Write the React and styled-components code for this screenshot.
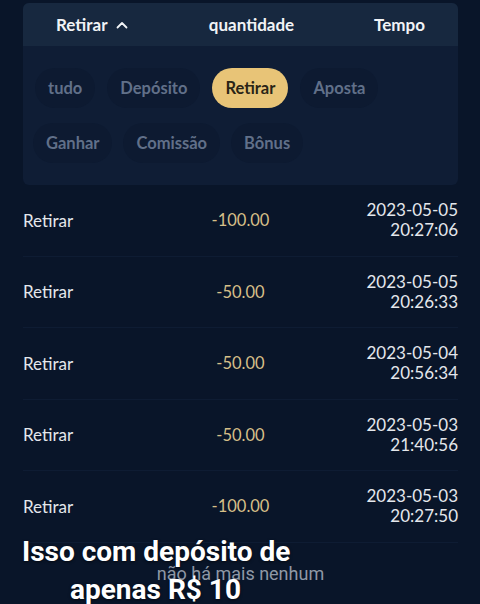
import React from 'react';
import styled, { createGlobalStyle } from 'styled-components';

const GlobalStyle = createGlobalStyle`
  html, body {
    margin: 0;
    padding: 0;
    background: #081428;
  }
  body {
    font-family: Lato, "Noto Sans", sans-serif;
  }
`

const StyledPage = styled.div`
  position: relative;
  width: 480px;
  height: 604px;
  overflow: hidden;
  background: #091529;
  padding: 3px 22px 0px 23px;
  box-sizing: border-box;
`

const StyledPanel = styled.div`
  border-radius: 6px;
  overflow: hidden;
  background: #0f1d35;
`

const StyledHeader = styled.div`
  display: grid;
  grid-template-columns: 170px 1fr 148px;
  align-items: center;
  height: 43px;
  background: #17283f;
  color: #f1f3f6;
  font-size: 17px;
  font-weight: 700;
`

const StyledHeadCell = styled.div`
  display: flex;
  align-items: center;
  gap: 7px;
  justify-content: ${p => p.align || 'center'};
  padding: ${p => p.pad || '0px'};
`

const StyledChips = styled.div`
  display: flex;
  flex-direction: column;
  gap: 15px;
  padding: 22px 0px 22px 10px;
`

const StyledChipRow = styled.div`
  display: flex;
  gap: ${p => p.gap || '9px'};
  padding-left: ${p => p.indent || '0px'};
`

const StyledChip = styled.div`
  height: 40px;
  display: flex;
  align-items: center;
  padding: 0px 13px;
  border-radius: 20px;
  font-size: 16.5px;
  font-weight: 700;
  background: ${p => (p.active ? '#e8c477' : '#0d1a31')};
  color: ${p => (p.active ? '#2a2416' : '#617089')};
`

const StyledRow = styled.div`
  display: grid;
  grid-template-columns: 1fr 1fr 1fr;
  align-items: center;
  height: 70.5px;
  border-bottom: 1px solid #0e1c33;
`

const StyledType = styled.div`
  color: #e4e7ec;
  font-size: 17px;
`

const StyledAmount = styled.div`
  text-align: center;
  color: #d6bf88;
  font-size: 16.5px;
`

const StyledTime = styled.div`
  text-align: right;
  color: #e4e7ec;
  font-size: 17px;
  line-height: 20px;
`

const StyledEnd = styled.div`
  text-align: center;
  color: #8f98a6;
  font-family: Roboto, sans-serif;
  font-size: 18px;
  padding-top: 20px;
`

const StyledCaption = styled.div`
  position: absolute;
  left: 22px;
  top: 533px;
  color: #ffffff;
  font-family: Roboto, sans-serif;
  font-weight: 700;
  font-size: 28px;
  line-height: 38px;
  text-shadow: 0 1px 3px rgba(0, 0, 0, 0.6);
`

const StyledCaptionLine = styled.div`
  padding-left: ${p => p.indent || '0px'};
`

const records = [
  { amount: '-100.00', date: '2023-05-05', time: '20:27:06' },
  { amount: '-50.00', date: '2023-05-05', time: '20:26:33' },
  { amount: '-50.00', date: '2023-05-04', time: '20:56:34' },
  { amount: '-50.00', date: '2023-05-03', time: '21:40:56' },
  { amount: '-100.00', date: '2023-05-03', time: '20:27:50' },
]

function ChevronUp() {
  return (
    <svg width="14" height="14" viewBox="0 0 14 14" fill="none">
      <path d="M2.5 9.5 L7 5 L11.5 9.5" stroke="#f1f3f6" strokeWidth="1.8" strokeLinecap="round" strokeLinejoin="round" />
    </svg>
  )
}

function App() {
  return (
    <StyledPage>
      <GlobalStyle />
      <StyledPanel>
        <StyledHeader>
          <StyledHeadCell align="flex-start" pad="0px 0px 0px 33px">
            Retirar <ChevronUp />
          </StyledHeadCell>
          <StyledHeadCell>quantidade</StyledHeadCell>
          <StyledHeadCell align="flex-end" pad="0px 33px 0px 0px">Tempo</StyledHeadCell>
        </StyledHeader>
        <StyledChips>
          <StyledChipRow gap="12px" indent="2px">
            <StyledChip>tudo</StyledChip>
            <StyledChip>Depósito</StyledChip>
            <StyledChip active>Retirar</StyledChip>
            <StyledChip>Aposta</StyledChip>
          </StyledChipRow>
          <StyledChipRow gap="11px">
            <StyledChip>Ganhar</StyledChip>
            <StyledChip>Comissão</StyledChip>
            <StyledChip>Bônus</StyledChip>
          </StyledChipRow>
        </StyledChips>
      </StyledPanel>
      {records.map((r, i) => (
        <StyledRow key={i}>
          <StyledType>Retirar</StyledType>
          <StyledAmount>{r.amount}</StyledAmount>
          <StyledTime>
            <div>{r.date}</div>
            <div>{r.time}</div>
          </StyledTime>
        </StyledRow>
      ))}
      <StyledEnd>não há mais nenhum</StyledEnd>
      <StyledCaption>
        <StyledCaptionLine>Isso com depósito de</StyledCaptionLine>
        <StyledCaptionLine indent="48px">apenas R$ 10</StyledCaptionLine>
      </StyledCaption>
    </StyledPage>
  );
}

export default App;
